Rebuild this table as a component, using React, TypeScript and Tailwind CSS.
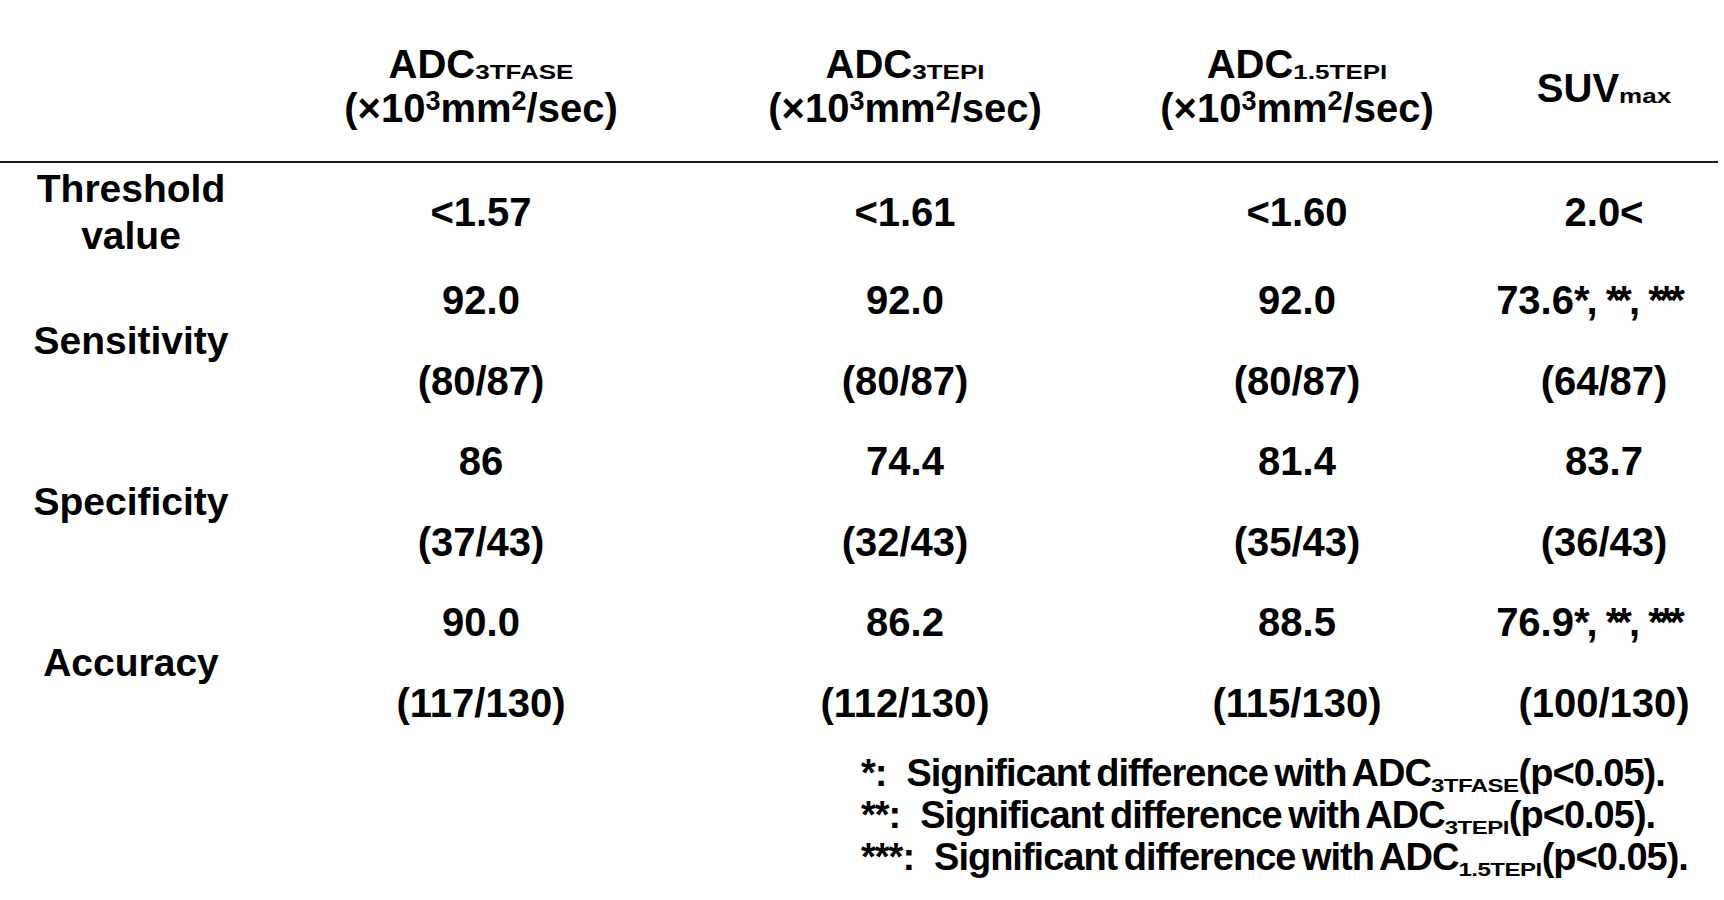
import React from "react";

function HSub({ children }: { children: React.ReactNode }) {
  return (
    <span className="inline-block text-[26px] leading-none origin-bottom scale-y-[0.75]">
      {children}
    </span>
  );
}

function Sup({ children }: { children: React.ReactNode }) {
  return (
    <span className="relative -top-[12px] inline-block text-[27px] leading-none">
      {children}
    </span>
  );
}

function FSub({ children }: { children: React.ReactNode }) {
  return (
    <span className="relative top-[5px] inline-block text-[24px] tracking-[-0.5px] leading-none origin-bottom scale-y-[0.75]">
      {children}
    </span>
  );
}

function AdcHeader({ sub }: { sub: string }) {
  return (
    <div className="flex flex-col items-center pt-[42px] text-[40px] leading-[44px]">
      <div>
        ADC<HSub>{sub}</HSub>
      </div>
      <div>
        (×10<Sup>3</Sup>mm<Sup>2</Sup>/sec)
      </div>
    </div>
  );
}

function Stars({ n }: { n: string }) {
  return <span className="tracking-[-5px]">{n}</span>;
}

function Val({ t }: { t: string }) {
  const idx = t.indexOf("*");
  if (idx < 0) return <>{t}</>;
  return (
    <span className="pr-[32px] [word-spacing:-3px]">
      {t.slice(0, idx)}
      <Stars n="*" />
      <span className="pl-[2px]">, </span>
      <Stars n="**" />
      <span className="pl-[2px]">, </span>
      <Stars n="***" />
    </span>
  );
}

type Group = { label: string; top: string[]; bottom: string[] };

const groups: Group[] = [
  {
    label: "Sensitivity",
    top: ["92.0", "92.0", "92.0", "73.6*, **, ***"],
    bottom: ["(80/87)", "(80/87)", "(80/87)", "(64/87)"],
  },
  {
    label: "Specificity",
    top: ["86", "74.4", "81.4", "83.7"],
    bottom: ["(37/43)", "(32/43)", "(35/43)", "(36/43)"],
  },
  {
    label: "Accuracy",
    top: ["90.0", "86.2", "88.5", "76.9*, **, ***"],
    bottom: ["(117/130)", "(112/130)", "(115/130)", "(100/130)"],
  },
];

function Note({ stars, sub }: { stars: string; sub: string }) {
  return (
    <div>
      {stars}:<span className="inline-block w-[20px]" />
      Significant difference with ADC<FSub>{sub}</FSub>(p&lt;0.05).
    </div>
  );
}

export default function App() {
  return (
    <div className="w-[1724px] h-[900px] bg-white text-black font-bold font-['Liberation_Sans',Arial,sans-serif] overflow-hidden">
      <div className="grid grid-cols-[262px_438px_410px_374px_240px]">
        {/* header */}
        <div className="h-[161px]" />
        <AdcHeader sub="3TFASE" />
        <AdcHeader sub="3TEPI" />
        <AdcHeader sub="1.5TEPI" />
        <div className="flex justify-center pt-[66px] text-[40px] leading-[44px]">
          <div>
            SUV<HSub>max</HSub>
          </div>
        </div>

        <div className="col-span-5 h-[2px] w-[1718px] bg-[#1c1c1c]" />

        {/* threshold */}
        <div className="flex h-[97px] flex-col items-center justify-center text-[39px] leading-[47px]">
          <div>Threshold</div>
          <div>value</div>
        </div>
        {["<1.57", "<1.61", "<1.60", "2.0<"].map((t, i) => (
          <div key={i} className="flex h-[97px] items-center justify-center text-[40px] leading-none">
            {t}
          </div>
        ))}

        {groups.map((g) => (
          <React.Fragment key={g.label}>
            <div className="flex h-[161px] items-center justify-center text-[39px] leading-none">
              {g.label}
            </div>
            {g.top.map((t, i) => (
              <div key={i} className="grid h-[161px] grid-rows-2 text-[40px] leading-none">
                <div className="flex items-center justify-center whitespace-nowrap">
                  <Val t={t} />
                </div>
                <div className="flex items-center justify-center whitespace-nowrap">{g.bottom[i]}</div>
              </div>
            ))}
          </React.Fragment>
        ))}
      </div>

      <div className="ml-[861px] mt-[9px] flex flex-col text-[38px] leading-[42px] tracking-[-1px] [word-spacing:-3px] whitespace-nowrap">
        <Note stars="*" sub="3TFASE" />
        <Note stars="**" sub="3TEPI" />
        <Note stars="***" sub="1.5TEPI" />
      </div>
    </div>
  );
}
